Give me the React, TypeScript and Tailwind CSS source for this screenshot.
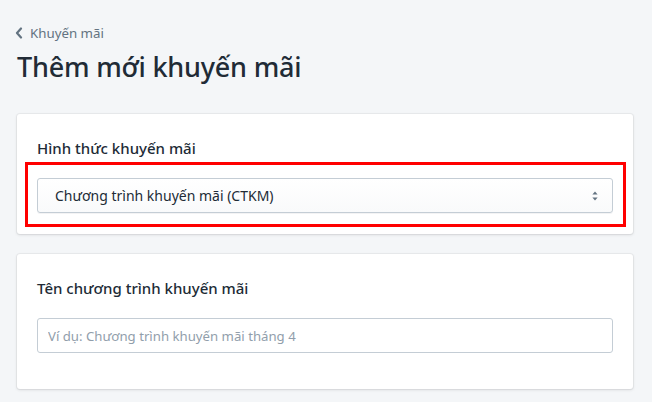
const font = { fontFamily: '"Noto Sans", "Open Sans", sans-serif' };

function BackChevron() {
  return (
    <svg viewBox="0 0 8 12" className="w-[8px] h-[12px]" fill="none" stroke="#637381" strokeWidth="2.2" strokeLinecap="round" strokeLinejoin="round">
      <path d="M6 1.5 L2 6 L6 10.5" />
    </svg>
  );
}

function SelectArrows() {
  return (
    <svg viewBox="0 0 6 10" className="w-[6px] h-[10px]" fill="#637381">
      <path d="M3 0.5 L5.6 3.6 H0.4 Z" />
      <path d="M3 9.5 L5.6 6.4 H0.4 Z" />
    </svg>
  );
}

export default function App() {
  return (
    <div className="min-h-screen bg-[#f4f6f8] pl-[17px] pr-[19px] pt-[23px] pb-[20px] text-[#212b36] font-['Noto_Sans','Open_Sans',sans-serif]">
      <a href="#" className="flex items-center gap-[7px] text-[13.3px] leading-[20px] text-[#637381] -ml-[2px]">
        <BackChevron />
        <span>Khuyến mãi</span>
      </a>

      <h1 className="mt-[6px] text-[27px] leading-[36px] font-medium tracking-[-0.2px]">Thêm mới khuyến mãi</h1>

      <div className="mt-[29px] flex flex-col gap-[20px]">
        <section className="rounded-[3px] bg-white px-[20px] pt-[22px] pb-[21px] shadow-[0_0_0_1px_rgba(63,63,68,0.05),0_1px_3px_0_rgba(63,63,68,0.15)]">
          <h2 className="text-[15px] leading-[24px] font-medium">Hình thức khuyến mãi</h2>
          <div className="relative mt-[18px]">
            <div className="pointer-events-none absolute -left-[12px] -top-[16px] -right-[13px] -bottom-[14px] border-[3px] border-[#ff0000]" />
            <button className="flex h-[35px] w-full items-center justify-between rounded-[3px] border border-[#c4cdd5] bg-gradient-to-b from-white to-[#f9fafb] pl-[17px] pr-[14px] text-left text-[14px] text-[#212b36] shadow-[0_1px_0_0_rgba(22,29,37,0.05)]" style={font}>
              <span>Chương trình khuyến mãi (CTKM)</span>
              <SelectArrows />
            </button>
          </div>
        </section>

        <section className="rounded-[3px] bg-white px-[20px] pt-[22px] pb-[36px] shadow-[0_0_0_1px_rgba(63,63,68,0.05),0_1px_3px_0_rgba(63,63,68,0.15)]">
          <h2 className="text-[15px] leading-[24px] font-medium">Tên chương trình khuyến mãi</h2>
          <input
            className="mt-[18px] block h-[35px] w-full rounded-[3px] border border-[#c4cdd5] bg-white px-[10px] text-[13.2px] text-[#212b36] placeholder:text-[#919eab] outline-none"
            style={font}
            placeholder="Ví dụ: Chương trình khuyến mãi tháng 4"
          />
        </section>
      </div>
    </div>
  );
}
